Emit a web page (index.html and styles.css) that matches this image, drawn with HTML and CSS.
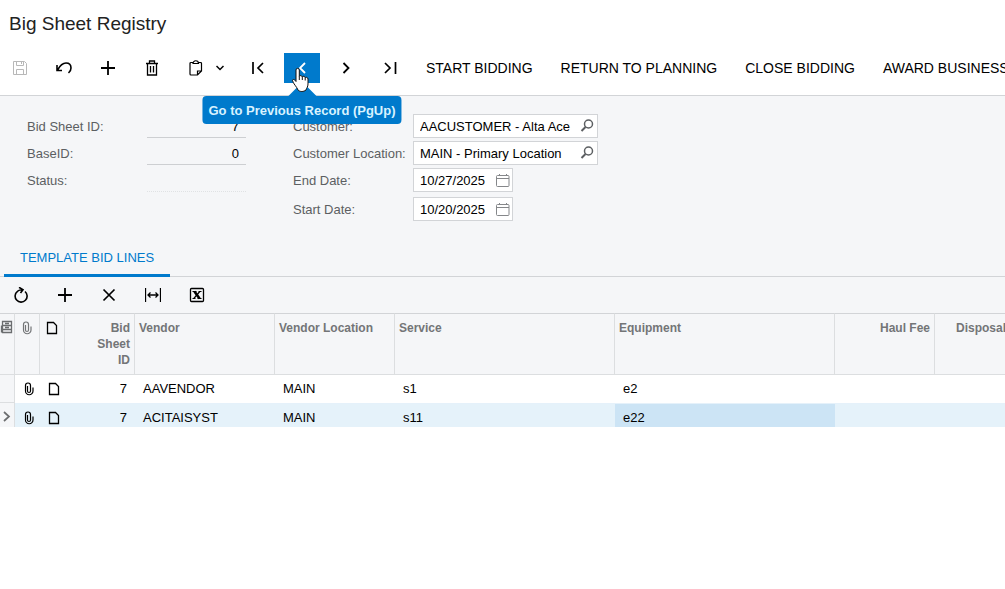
FILE: index.html
```
<!DOCTYPE html>
<html lang="en">
<head>
    <meta charset="UTF-8">
    <meta name="viewport" content="width=device-width, initial-scale=1.0">
    <title>Big Sheet Registry</title>
    <link rel="stylesheet" href="styles.css">
</head>
<body>
    <!-- shared icons -->
    <svg class="icon-defs" aria-hidden="true">
        <symbol id="plus" viewBox="0 0 16 16"><path d="M8 1v14M1 8h14" stroke-width="1.800"/></symbol>
        <symbol id="clip" viewBox="0 0 16 16"><path d="M6.500 5v5a1.500 1.500 0 0 0 3 0V4.500a2.500 2.500 0 0 0-5 0v5.500a3.500 3.500 0 0 0 7.500 0V6.500" stroke-width="1.200"/></symbol>
        <symbol id="note" viewBox="0 0 16 16"><path d="M3.500 2.500h6l3 3v8h-9z" stroke-width="1.300"/></symbol>
        <symbol id="search" viewBox="0 0 16 16"><circle cx="9.500" cy="6" r="4" stroke-width="1.500"/><path d="M6.500 9L2.500 13" stroke-width="2"/></symbol>
        <symbol id="calendar" viewBox="0 0 16 16"><rect x="1.500" y="3.500" width="12.500" height="11" rx="1" stroke-width="1"/><path d="M2 6.500h12M4.500 2v2M11.500 2v2" stroke-width="1"/></symbol>
    </svg>

    <header class="page-header">
        <h1>Big Sheet Registry</h1>
        <div class="toolbar">
            <button type="button" class="icon-btn" aria-label="Save" disabled>
                <svg class="icon" viewBox="0 0 16 16"><path d="M1.500 1.500h11l2 2v11h-13zM4.500 1.500v4h7v-4M9.500 2v2M4.500 14.500v-5h7v5" stroke-width="1"/></svg>
            </button>
            <button type="button" class="icon-btn" aria-label="Undo">
                <svg class="icon" viewBox="0 0 16 16"><path d="M1.500 10C4 5.500 6.500 3 10 3c3 0 5 2 5 5 0 2.300-1 3.800-2.500 5M1 5v5.500h5" stroke-width="1.600"/></svg>
            </button>
            <button type="button" class="icon-btn" aria-label="Add">
                <svg class="icon"><use href="#plus"/></svg>
            </button>
            <button type="button" class="icon-btn" aria-label="Delete">
                <svg class="icon" viewBox="0 0 16 16"><path d="M2 3.500h12M5.500 3V1h5v2M3.500 4v11h9V4M6.500 6v6.500M9.500 6v6.500" stroke-width="1.300"/></svg>
            </button>
            <button type="button" class="icon-btn clipboard-btn" aria-label="Clipboard">
                <svg class="icon" viewBox="0 0 16 16"><path d="M5 2.500H3a1 1 0 0 0-1 1v10.500a1 1 0 0 0 1 1h6.500l4-4V3.500a1 1 0 0 0-1-1h-2M5 3.500a2.700 2.700 0 0 1 5.500 0zM9.500 15v-4h4" stroke-width="1.200"/></svg>
                <svg class="caret" viewBox="0 0 8 6"><path d="M0.500 1L4 4.500 7.500 1" stroke-width="1.500"/></svg>
            </button>
            <button type="button" class="icon-btn" aria-label="First record">
                <svg class="icon" viewBox="0 0 16 16"><path d="M3 2v12M13 3L8 8l5 5" stroke-width="1.700"/></svg>
            </button>
            <div class="tip-anchor">
                <button type="button" class="icon-btn active" aria-label="Previous record" aria-describedby="prevTip">
                    <svg class="icon" viewBox="0 0 16 16"><path d="M11 3L6 8l5 5" stroke-width="1.800"/></svg>
                </button>
                <div class="tooltip" id="prevTip" role="tooltip">Go to Previous Record (PgUp)</div>
                <svg class="cursor" viewBox="0 0 18 27" aria-hidden="true"><path d="M5 15.500V4a1.600 1.600 0 0 1 3.300 0v6.500c.4-1.400 2.800-1.200 3 .5.500-1.200 2.700-1 2.900.8.600-1 2.800-.6 2.800 1.200V18c0 3-1.500 4-2 6-2.500 2-6 2-8 0C6 21 2 17.500 1.500 14.500 1.500 13 3.500 13 5 15.500zM8.300 10.500v3.500M11.300 11v3M14.200 12v2.500"/></svg>
            </div>
            <button type="button" class="icon-btn" aria-label="Next record">
                <svg class="icon" viewBox="0 0 16 16"><path d="M5.500 3l5 5-5 5" stroke-width="1.800"/></svg>
            </button>
            <button type="button" class="icon-btn" aria-label="Last record">
                <svg class="icon" viewBox="0 0 16 16"><path d="M13.500 2v12M3 3l5 5-5 5" stroke-width="1.700"/></svg>
            </button>
            <button type="button" class="text-btn">START BIDDING</button>
            <button type="button" class="text-btn">RETURN TO PLANNING</button>
            <button type="button" class="text-btn">CLOSE BIDDING</button>
            <button type="button" class="text-btn">AWARD BUSINESS</button>
        </div>
    </header>

    <form class="summary">
        <div class="fields fields-left">
            <label for="bidSheetId">Bid Sheet ID:</label>
            <input type="text" id="bidSheetId" class="line-input" value="7">
            <label for="baseId">BaseID:</label>
            <input type="text" id="baseId" class="line-input" value="0">
            <label for="status">Status:</label>
            <input type="text" id="status" class="line-input readonly" readonly>
        </div>
        <div class="fields fields-right">
            <label for="customer">Customer:</label>
            <div class="box">
                <input type="text" id="customer" value="AACUSTOMER - Alta Ace">
                <button type="button" aria-label="Find customer"><svg class="icon"><use href="#search"/></svg></button>
            </div>
            <label for="location">Customer Location:</label>
            <div class="box">
                <input type="text" id="location" value="MAIN - Primary Location">
                <button type="button" aria-label="Find location"><svg class="icon"><use href="#search"/></svg></button>
            </div>
            <label for="endDate">End Date:</label>
            <div class="box date">
                <input type="text" id="endDate" value="10/27/2025">
                <button type="button" aria-label="Pick end date"><svg class="icon"><use href="#calendar"/></svg></button>
            </div>
            <label for="startDate">Start Date:</label>
            <div class="box date">
                <input type="text" id="startDate" value="10/20/2025">
                <button type="button" aria-label="Pick start date"><svg class="icon"><use href="#calendar"/></svg></button>
            </div>
        </div>
    </form>

    <nav class="tabs">
        <a href="#lines" class="tab">TEMPLATE BID LINES</a>
    </nav>

    <section id="lines">
        <div class="toolbar grid-toolbar">
            <button type="button" class="icon-btn" aria-label="Refresh">
                <svg class="icon" viewBox="0 0 16 16"><path d="M12 4.500A6 6 0 1 1 4.500 4.300C5.500 3.300 7 2.700 9.500 2.700M6 0.300l4 2.400L7.500 6" stroke-width="1.600"/></svg>
            </button>
            <button type="button" class="icon-btn" aria-label="Add row">
                <svg class="icon"><use href="#plus"/></svg>
            </button>
            <button type="button" class="icon-btn" aria-label="Delete row">
                <svg class="icon" viewBox="0 0 16 16"><path d="M2.500 2.500l11 11M13.500 2.500l-11 11" stroke-width="1.700"/></svg>
            </button>
            <button type="button" class="icon-btn" aria-label="Fit to screen">
                <svg class="icon" viewBox="0 0 16 16"><path d="M0.500 1v14M15.500 1v14M3 8h10M5.500 5.500L3 8l2.500 2.500M10.500 5.500L13 8l-2.500 2.500" stroke-width="1.300"/></svg>
            </button>
            <button type="button" class="icon-btn" aria-label="Export to Excel">
                <svg class="icon" viewBox="0 0 16 16"><rect x="1.500" y="1.500" width="13" height="13" rx="1" stroke-width="1.300"/><path d="M5.500 4.500l5 7" stroke-width="2.600"/><path d="M10.800 4.500l-6 7M3.500 4.500h4M9.500 4.500h3M3.500 11.500h3M8.500 11.500h4" stroke-width="1.200"/></svg>
            </button>
        </div>
        <div class="grid-wrap">
            <table class="grid">
                <colgroup>
                    <col class="w-mark"><col class="w-icon"><col class="w-icon"><col class="w-id"><col class="w-vendor"><col class="w-location"><col class="w-wide"><col class="w-wide"><col class="w-fee"><col class="w-fee">
                </colgroup>
                <thead>
                    <tr>
                        <th class="mark"><svg class="icon" viewBox="0 0 16 16"><path d="M2.500 1.500h9v4h-9zM2.500 5.500h9v4h-9zM2.500 9.500h9v3h-9zM5 3.500h4M5 7.500h4M1.500 5.500v7" stroke-width="1.300"/></svg></th>
                        <th class="ico"><svg class="icon"><use href="#clip"/></svg></th>
                        <th class="ico dark"><svg class="icon"><use href="#note"/></svg></th>
                        <th class="num wrap">Bid Sheet ID</th>
                        <th>Vendor</th>
                        <th>Vendor Location</th>
                        <th>Service</th>
                        <th>Equipment</th>
                        <th class="num">Haul Fee</th>
                        <th class="num">Disposal Fee</th>
                    </tr>
                </thead>
                <tbody>
                    <tr>
                        <td class="mark"></td>
                        <td class="ico"><svg class="icon"><use href="#clip"/></svg></td>
                        <td class="ico"><svg class="icon"><use href="#note"/></svg></td>
                        <td class="num">7</td>
                        <td>AAVENDOR</td>
                        <td>MAIN</td>
                        <td>s1</td>
                        <td>e2</td>
                        <td></td>
                        <td></td>
                    </tr>
                    <tr class="selected">
                        <td class="mark"><svg class="icon" viewBox="0 0 16 16"><path d="M4 3l5 4.500L4 12" stroke-width="1.700"/></svg></td>
                        <td class="ico"><svg class="icon"><use href="#clip"/></svg></td>
                        <td class="ico"><svg class="icon"><use href="#note"/></svg></td>
                        <td class="num">7</td>
                        <td>ACITAISYST</td>
                        <td>MAIN</td>
                        <td>s11</td>
                        <td class="current">e22</td>
                        <td></td>
                        <td></td>
                    </tr>
                </tbody>
            </table>
        </div>
    </section>
</body>
</html>
```
FILE: styles.css
```
* {
    box-sizing: border-box;
}

body {
    margin: 0;
    font-family: "Liberation Sans", Arial, sans-serif;
    font-size: 13px;
    line-height: 16px;
    color: #000;
    background-color: #fff;
    overflow-x: hidden;
}

button,
input {
    font: inherit;
    color: inherit;
    background: none;
    border: none;
    padding: 0;
}

button {
    cursor: pointer;
}

svg {
    fill: none;
    stroke: currentColor;
}

.icon {
    display: block;
    width: 16px;
    height: 16px;
    flex: none;
}

.icon-defs {
    display: none;
}

/* Header */
.page-header {
    border-bottom: 1px solid #d2d4d7;
}

h1 {
    margin: 0;
    padding: 12px 9px 17px;
    font-size: 19px;
    font-weight: normal;
    line-height: 24px;
    color: #222;
}

.toolbar {
    display: flex;
    gap: 8px;
    padding: 0 2px 12px;
    white-space: nowrap;
}

.icon-btn {
    display: flex;
    align-items: center;
    justify-content: center;
    flex: none;
    width: 36px;
    height: 30px;
}

.icon-btn:disabled {
    color: #b8b8b8;
}

.clipboard-btn {
    justify-content: flex-start;
    gap: 12px;
    width: 54px;
    padding-left: 10px;
}

.caret {
    width: 8px;
    height: 6px;
}

.icon-btn.active {
    color: #fff;
    background-color: #007acc;
}

.text-btn {
    flex: none;
    padding: 0 10px;
    font-size: 14px;
}

/* Tooltip under the hovered button */
.tip-anchor {
    position: relative;
}

.tooltip {
    position: absolute;
    z-index: 1;
    top: 43px;
    left: 50%;
    transform: translateX(-50%);
    padding: 7px 6px 5px;
    border-radius: 4px;
    font-weight: bold;
    color: #d9f3ff;
    background-color: #007acc;
}

.tooltip::before {
    content: "";
    position: absolute;
    bottom: 100%;
    left: 50%;
    margin-left: -14px;
    border: 14px solid transparent;
    border-top: none;
    border-bottom-color: #007acc;
}

.cursor {
    position: absolute;
    z-index: 2;
    top: 13px;
    left: 7px;
    width: 18px;
    height: 27px;
    fill: #fff;
    stroke: #111;
}

/* Summary form */
.summary {
    display: flex;
    gap: 47px;
    padding: 18px 27px 10px;
    background-color: #f5f6f8;
}

.fields {
    display: grid;
    grid-auto-rows: 24px;
    row-gap: 3px;
    align-items: center;
    align-content: start;
    color: #5c5f62;
}

.fields label {
    padding-top: 1px;
}

.fields-left {
    grid-template-columns: 120px 99px;
}

.fields-right {
    grid-template-columns: 120px 185px;
    grid-template-rows: 24px 24px 24px 28px;
}

.line-input {
    width: 100%;
    height: 24px;
    padding: 2px 7px 0 0;
    border-bottom: 1px solid #cdcfd2;
    text-align: right;
    color: #000;
}

.line-input.readonly {
    border-bottom: 1px dotted #e0e2e4;
}

.box {
    display: flex;
    align-items: center;
    height: 24px;
    padding: 0 2px 0 6px;
    border: 1px solid #d2d4d7;
    color: #5c5f62;
    background-color: #fff;
}

.box input {
    flex: 1;
    min-width: 0;
    padding-top: 1px;
    color: #000;
}

.box.date {
    width: 100px;
    padding-right: 1px;
    color: #85878a;
}

/* Tabs */
.tabs {
    display: flex;
    padding-left: 4px;
    border-bottom: 1px solid #d2d4d7;
    background-color: #f5f6f8;
}

.tab {
    margin-bottom: -1px;
    padding: 17px 16px 8px;
    border-bottom: 3px solid #007acc;
    text-decoration: none;
    color: #007acc;
}

.grid-toolbar {
    padding: 3px;
    background-color: #f5f6f8;
}

/* Grid */
.grid-wrap {
    overflow: hidden;
}

.grid {
    width: 1035px;
    table-layout: fixed;
    border-collapse: separate;
    border-spacing: 0;
}

.w-mark { width: 15px; }
.w-icon { width: 25px; }
.w-id { width: 70px; }
.w-vendor { width: 140px; }
.w-location { width: 120px; }
.w-wide { width: 220px; }
.w-fee { width: 100px; }

.grid th {
    height: 62px;
    padding: 6px 4px;
    border: 1px solid #dcdee0;
    border-width: 1px 1px 1px 0;
    border-top-color: #d2d4d7;
    font-size: 12px;
    text-align: left;
    vertical-align: top;
    color: #737577;
    background-color: #f5f6f8;
}

.grid td {
    height: 28px;
    padding: 6px 8px 0;
    vertical-align: top;
}

.grid .num {
    text-align: right;
}

.grid th.wrap {
    padding-left: 30px;
}

.grid .mark {
    padding-left: 0;
    padding-right: 0;
    border-right: 1px solid #dcdee0;
    color: #6b6d6f;
    background-color: #f5f6f8;
}

.grid td.mark {
    border-bottom: 1px solid #dcdee0;
}

.grid .ico {
    padding-left: 4px;
    padding-right: 0;
}

.grid td.ico {
    padding-left: 6px;
}

.grid th.dark {
    color: #000;
}

.grid .selected td {
    height: 24px;
    border-top: 1px solid #e5f1fa;
    background-color: #e5f2fa;
}

.grid .selected .mark {
    border-top: none;
    border-bottom: none;
    background-color: #f5f6f8;
}

.grid .selected .current {
    background-color: #cce4f5;
}
```
